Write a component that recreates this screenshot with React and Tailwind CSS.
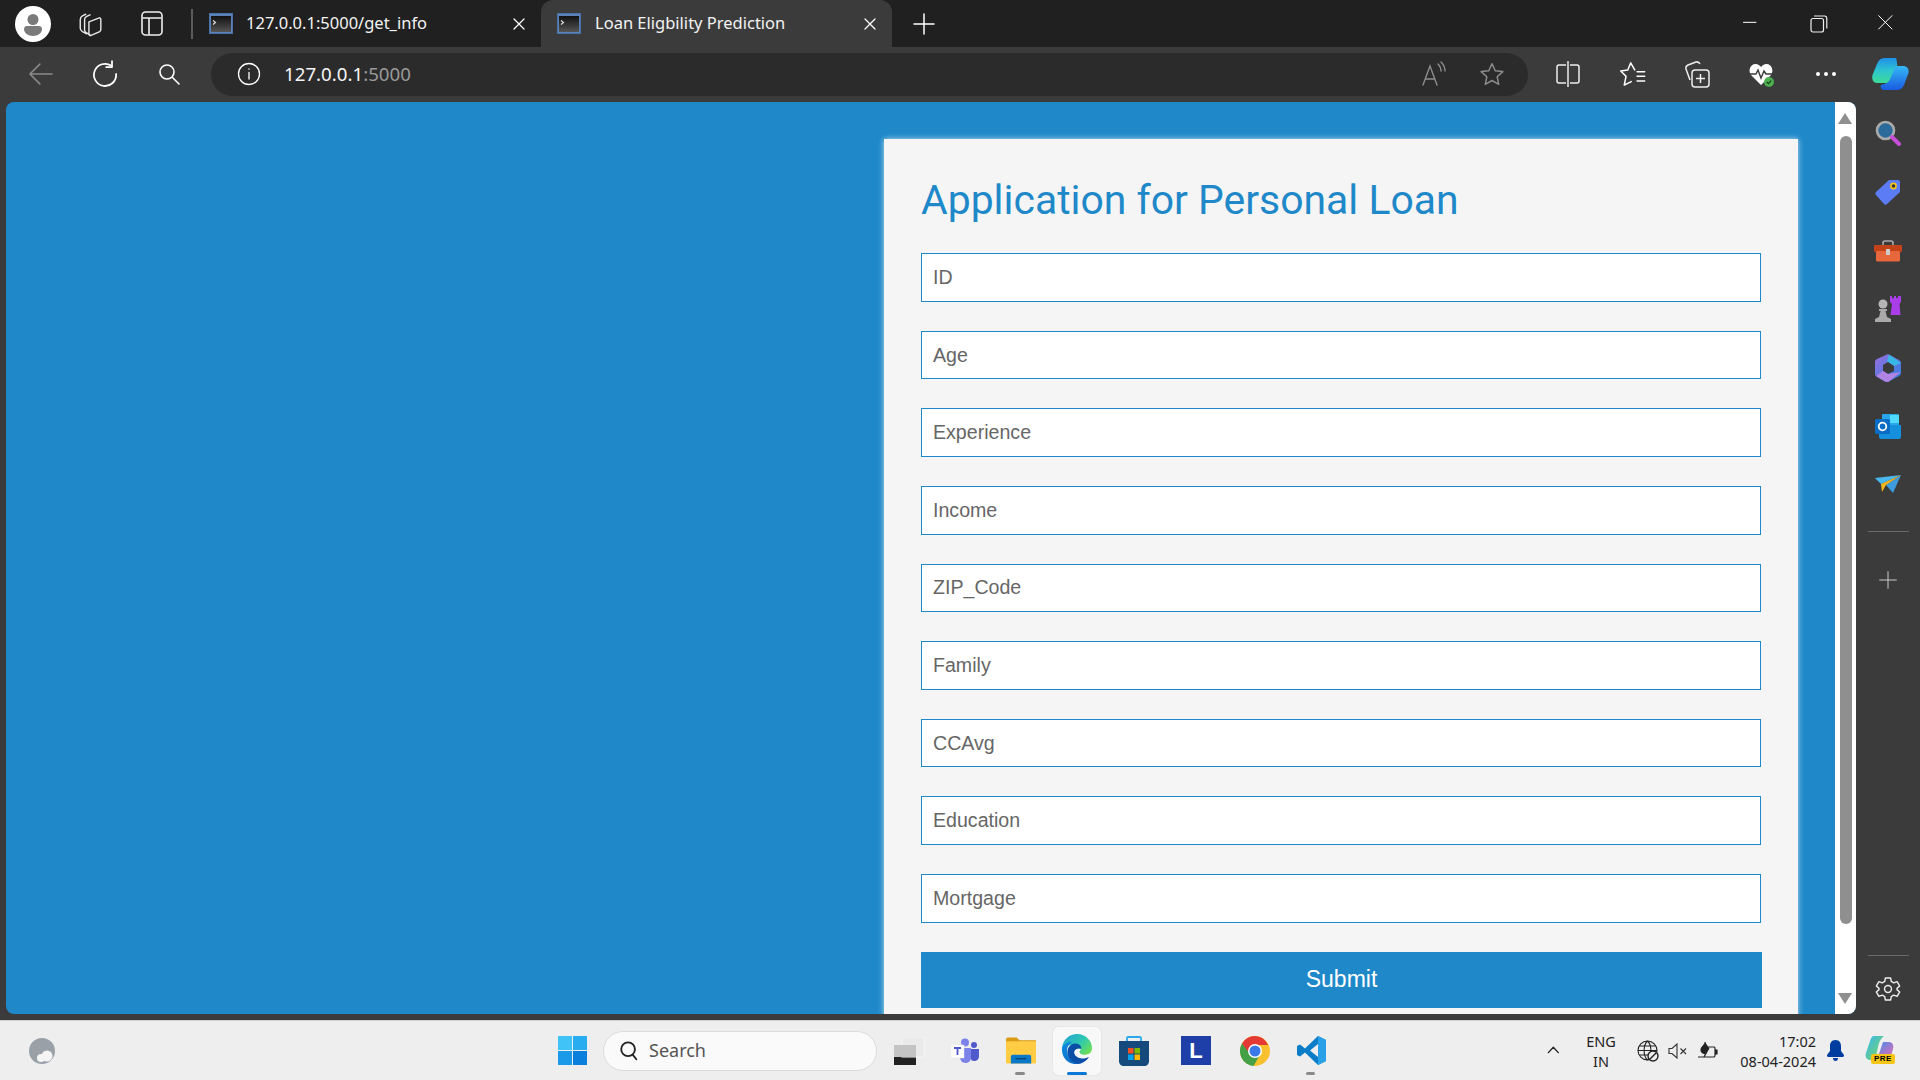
import React from 'react';

const labels = ['ID', 'Age', 'Experience', 'Income', 'ZIP_Code', 'Family', 'CCAvg', 'Education', 'Mortgage'];

function Line({ size = 24, stroke = '#fff', sw = 1.5, children }) {
    return (
        <svg width={size} height={size} viewBox="0 0 24 24" fill="none" stroke={stroke} strokeWidth={sw} strokeLinecap="round" strokeLinejoin="round">
            {children}
        </svg>
    );
}

function Favicon() {
    return (
        <svg width="24" height="21" viewBox="0 0 24 21">
            <defs>
                <linearGradient id="fav" x1="0" y1="0" x2="0" y2="1">
                    <stop offset="0" stopColor="#111" />
                    <stop offset="1" stopColor="#555" />
                </linearGradient>
            </defs>
            <rect x="0.5" y="0.5" width="23" height="20" fill="#5a82b8" stroke="#4a72a8" />
            <rect x="2" y="3" width="20" height="16" fill="url(#fav)" />
            <path d="M4 7.5 L6.5 9.5 L4 11.5" fill="none" stroke="#ddd" strokeWidth="1.2" />
        </svg>
    );
}

function Tab({ title, active }) {
    return (
        <div className={active ? 'flex h-[47px] w-[351px] items-center rounded-t-[12px] bg-[#3b3b3b] pl-[16px]' : 'flex h-[47px] w-[348px] items-center pl-[16px]'}>
            <Favicon />
            <span className={active ? "ml-[14px] font-['Noto_Sans',sans-serif] text-[16.5px] whitespace-nowrap text-[#f2f2f2]" : "ml-[13px] font-['Noto_Sans',sans-serif] text-[16.5px] whitespace-nowrap text-[#f2f2f2]"}>{title}</span>
            <div className="mr-[12px] ml-auto flex w-[20px] justify-center">
                <Line size={20}><path d="M6 6 L18 18 M18 6 L6 18" /></Line>
            </div>
        </div>
    );
}

function TabBar() {
    return (
        <div className="flex h-[47px] items-center bg-[#202020]">
            <div className="ml-[15px] flex h-[36px] w-[36px] items-center justify-center rounded-full bg-white">
                <svg width="26" height="26" viewBox="0 0 26 26" fill="#7a7a7a">
                    <circle cx="13" cy="8.5" r="5.5" />
                    <path d="M4 18 C4 15.5 6 15 8 15 H18 C20 15 22 15.5 22 18 C22 22 18 25 13 25 C8 25 4 22 4 18 Z" />
                </svg>
            </div>
            <div className="ml-[21px] flex w-[36px] justify-center">
                <Line size={26} sw={1.3} stroke="#e8e8e8">
                    <path d="M9 21 L5 19 C3.5 18 3 17 3 16 V8 C3 6 4 5 5 4.5 L8 3" />
                    <path d="M12 22 L8.5 20 C7.5 19.5 7 18.5 7 17.5 V8 C7 6.5 8 5.5 9 5 L12 3.5" />
                    <path d="M11 10 L20 6.5 C21 6 22 6.5 22 8 V17 C22 18 21.5 18.5 21 19 L13 22.5 C12 23 11 22.5 11 21 Z" />
                </Line>
            </div>
            <div className="ml-[32px] flex w-[24px] justify-center">
                <svg width="22" height="25" viewBox="0 0 22 25" fill="none" stroke="#eee" strokeWidth="1.6">
                    <rect x="1" y="1" width="20" height="23" rx="3.5" />
                    <path d="M1.5 7 H20.5 M8 7 V23.5" />
                </svg>
            </div>
            <div className="ml-[27px] h-[30px] w-[2px] bg-[#5a5a5a]" />
            <Tab title="127.0.0.1:5000/get_info" />
            <Tab title="Loan Eligbility Prediction" active />
            <div className="ml-[20px] flex w-[24px] justify-center">
                <Line size={24} sw={1.5}><path d="M2 12 H22 M12 2 V22" /></Line>
            </div>
            <div className="ml-auto flex items-center gap-[48px] pr-[23px]">
                <div className="flex w-[20px] justify-center">
                    <Line size={20} sw={1.2}><path d="M3 10 H18" /></Line>
                </div>
                <div className="flex w-[20px] justify-center">
                    <svg width="18" height="18" viewBox="0 0 18 18" fill="none" stroke="#eee" strokeWidth="1.2">
                        <rect x="1" y="3.5" width="12.5" height="13.5" rx="2" />
                        <path d="M4 1 H14.5 C16 1 16.8 2 16.8 3.5 V13.5" />
                    </svg>
                </div>
                <div className="flex w-[20px] justify-center">
                    <Line size={20} sw={1.2}><path d="M2 2 L18 18 M18 2 L2 18" /></Line>
                </div>
            </div>
        </div>
    );
}

function ToolBar() {
    return (
        <div className="flex h-[55px] items-center bg-[#3b3b3b] pb-[1px]">
            <div className="ml-[21px] flex items-center gap-[24px]">
                <div className="flex w-[40px] justify-center">
                    <Line size={28} stroke="#8a8a8a" sw={1.4}><path d="M2.5 12 H21.5 M11 3.5 L2.5 12 L11 20.5" /></Line>
                </div>
                <div className="flex w-[40px] justify-center">
                    <Line size={28} sw={1.5}>
                        <path d="M17.5 5 A9.5 9.5 0 1 0 21.5 12" />
                        <path d="M18 1 V6 H13" />
                    </Line>
                </div>
                <div className="flex w-[40px] justify-center">
                    <Line size={24} sw={1.6}>
                        <circle cx="10" cy="10" r="7" />
                        <path d="M15.5 15.5 L22 22" />
                    </Line>
                </div>
            </div>
            <div className="ml-[22px] flex h-[43px] w-[1317px] items-center rounded-full bg-[#2b2b2b]">
                <div className="ml-[26px] flex w-[24px] justify-center">
                    <Line size={24} sw={1.3}>
                        <circle cx="12" cy="12" r="10.5" />
                        <path d="M12 10.5 V17 M12 6.8 V7.2" />
                    </Line>
                </div>
                <span className="ml-[23px] font-['Noto_Sans',sans-serif] text-[18.7px] text-[#f5f5f5]">
                    127.0.0.1<span className="text-[#9a9a9a]">:5000</span>
                </span>
                <div className="ml-auto flex w-[26px] justify-center">
                    <svg width="26" height="26" viewBox="0 0 26 26" fill="none" stroke="#8c8c8c" strokeWidth="1.4" strokeLinecap="round">
                        <path d="M2 24 L9 5 L16 24 M4.5 18 H13.5" />
                        <path d="M17 3 C19 5 20 7 20 10 M20 1 C23 4 24 7 24 10" />
                    </svg>
                </div>
                <div className="mr-[23px] ml-[32px] flex w-[26px] justify-center">
                    <Line size={26} stroke="#8c8c8c" sw={1.4}><path d="M12 2.5 L15 9 L22 9.8 L16.8 14.6 L18.2 21.5 L12 18 L5.8 21.5 L7.2 14.6 L2 9.8 L9 9 Z" /></Line>
                </div>
            </div>
            <div className="ml-[20px] flex items-center gap-[24.5px]">
                <div className="flex w-[40px] justify-center">
                    <svg width="24" height="28" viewBox="0 0 24 28" fill="none" stroke="#eee" strokeWidth="1.5">
                        <path d="M10 5 H3 C2 5 1 6 1 7 V21 C1 22 2 23 3 23 H10 M14 5 H21 C22 5 23 6 23 7 V21 C23 22 22 23 21 23 H14" />
                        <path d="M12 1 V27" />
                    </svg>
                </div>
                <div className="flex w-[40px] justify-center">
                    <Line size={28} sw={1.3}>
                        <path d="M13.5 8.5 L10 2.5 L7.5 8.5 L1.5 9.5 L6 14 L4.5 21.5 L10.5 18.5" />
                        <path d="M15.5 10 H22 M15.5 14 H22 M15.5 18 H22" />
                    </Line>
                </div>
                <div className="flex w-[40px] justify-center">
                    <svg width="26" height="28" viewBox="0 0 26 28" fill="none" stroke="#eee" strokeWidth="1.5" strokeLinejoin="round">
                        <path d="M6 20 L2 9 C1.5 7 2 6 4 5 L12 2 C14 1.5 15 2 16 4" />
                        <rect x="8" y="10" width="17" height="17" rx="3" />
                        <path d="M16.5 14 V23 M12 18.5 H21" />
                    </svg>
                </div>
                <div className="flex w-[40px] justify-center">
                    <svg width="28" height="28" viewBox="0 0 28 28">
                        <path d="M13 25 L3 15 C0 11 2 4 7.5 4 C10 4 12 5.5 13 7 C14 5.5 16 4 18.5 4 C24 4 26 11 23 15 Z" fill="#fff" />
                        <path d="M1 14 H8 L10 10 L13 18 L16 11 L18 14 H25" fill="none" stroke="#3b3b3b" strokeWidth="1.4" />
                        <circle cx="21" cy="22" r="5" fill="#4caf50" />
                        <path d="M18.8 22 L20.4 23.6 L23.2 20.6" fill="none" stroke="#1b3a1b" strokeWidth="1.1" />
                    </svg>
                </div>
                <div className="flex w-[40px] justify-center gap-[4px]">
                    <span className="h-[4px] w-[4px] rounded-full bg-white" />
                    <span className="h-[4px] w-[4px] rounded-full bg-white" />
                    <span className="h-[4px] w-[4px] rounded-full bg-white" />
                </div>
                <div className="flex w-[40px] justify-center">
                    <svg width="37" height="32" viewBox="0 0 37 32">
                        <defs>
                            <linearGradient id="cop1" x1="0" y1="0" x2="0" y2="1">
                                <stop offset="0" stopColor="#1f8fe8" />
                                <stop offset="0.5" stopColor="#2ec4d0" />
                                <stop offset="1" stopColor="#3ddc97" />
                            </linearGradient>
                            <linearGradient id="cop2" x1="0" y1="0" x2="0" y2="1">
                                <stop offset="0" stopColor="#36b8f5" />
                                <stop offset="1" stopColor="#1a5be0" />
                            </linearGradient>
                        </defs>
                        <path d="M12 0 H24 C25 3 26 8 24 14 L20 25 L5 25 C1 25 -0.5 21 0.5 17 L5 6 C6.5 2 9 0 12 0 Z" fill="url(#cop1)" />
                        <path d="M24 8 H31 C35 8 37.5 11 36.5 15 L32 27 C31 30 28 32 25 32 H12 C9 32 8 29 9 27 C14 26 17 24 18.5 20 L22 12 Z" fill="url(#cop2)" />
                    </svg>
                </div>
            </div>
        </div>
    );
}

function Scrollbar() {
    return (
        <div className="flex w-[21px] shrink-0 flex-col items-center bg-white pt-[11px]">
            <svg width="14" height="11" viewBox="0 0 14 11" className="ml-[-1px]"><path d="M7 0 L14 11 H0 Z" fill="#8f8f8f" /></svg>
            <div className="mt-[12px] h-[788px] w-[12px] rounded-full bg-[#8f8f8f]" />
            <svg width="14" height="11" viewBox="0 0 14 11" className="mt-[69px] ml-[-1px]"><path d="M0 0 H14 L7 11 Z" fill="#8f8f8f" /></svg>
        </div>
    );
}

function Page() {
    return (
        <div className="flex h-[912px] w-[1850px] overflow-hidden rounded-[8px] bg-[#1e88c9]">
            <div className="flex flex-1 justify-end overflow-hidden pt-[37px] pr-[37px]">
                <div className="h-[1100px] w-[914px] bg-[#f5f5f5] px-[37px] pt-[37px] shadow-[0_0_6px_rgba(255,255,255,0.7)]">
                    <h2 className="mb-[29.3px] font-['Roboto',sans-serif] text-[40.9px] leading-[48px] text-[#1e88c9]">Application for Personal Loan</h2>
                    <form className="flex flex-col gap-[29px]" onSubmit={(e) => e.preventDefault()}>
                        {labels.map((label) => (
                            <input
                                key={label}
                                placeholder={label}
                                className="h-[48.6px] w-[840px] border border-[#1e88c9] bg-white px-[11px] font-['Liberation_Sans',sans-serif] text-[19.6px] placeholder:text-[#666]"
                            />
                        ))}
                        <button className="h-[56px] w-[841px] bg-[#1e88c9] font-['Liberation_Sans',sans-serif] text-[23px] text-white">Submit</button>
                    </form>
                </div>
            </div>
            <Scrollbar />
        </div>
    );
}

function SideBar() {
    return (
        <div className="flex w-[64px] flex-col items-center pt-[1px]">
            <div className="flex h-[59px] items-center">
                <svg width="26" height="26" viewBox="0 0 26 26">
                    <circle cx="10.5" cy="10.5" r="8.5" fill="#2b6b9b" stroke="#aaa" strokeWidth="2.6" />
                    <path d="M17 17 L24 24" stroke="#c74fd8" strokeWidth="4" strokeLinecap="round" />
                </svg>
            </div>
            <div className="flex h-[59px] items-center">
                <svg width="26" height="26" viewBox="0 0 26 26">
                    <path d="M14 1 H23 C24.5 1 25 2 25 3 V13 L12 25 C11 26 10 26 9 25 L1 16 C0 15 0 14 1 13 Z" fill="#5b7cf5" />
                    <circle cx="18.5" cy="7" r="2.6" fill="#333" stroke="#f5c518" strokeWidth="1.6" />
                </svg>
            </div>
            <div className="flex h-[59px] items-center">
                <svg width="28" height="22" viewBox="0 0 28 22">
                    <path d="M9 6 V3 C9 2 10 1 11 1 H17 C18 1 19 2 19 3 V6" fill="none" stroke="#aaa" strokeWidth="1.6" />
                    <rect x="0" y="5" width="28" height="7" rx="1" fill="#c4421a" />
                    <rect x="2" y="11" width="24" height="10.5" rx="1.5" fill="#e8673c" />
                    <rect x="12" y="9" width="4" height="6" fill="#ccc" />
                </svg>
            </div>
            <div className="flex h-[58px] items-center">
                <svg width="28" height="28" viewBox="0 0 28 28">
                    <path d="M16 1 H18 V3 H20 V1 H22 V3 H24 V1 H27 V7 L25.5 9 L26.5 20 H16.5 L18 9 L16 7 Z" fill="#a93de8" />
                    <circle cx="9" cy="9" r="4.5" fill="#b5b5b5" />
                    <path d="M5 14 H13 V16 H11.5 L13 22 L17 24 V27 H1 V24 L5 22 L6.5 16 H5 Z" fill="#aaa" />
                </svg>
            </div>
            <div className="flex h-[59px] items-center">
                <svg width="26" height="28" viewBox="0 0 26 28">
                    <defs>
                        <linearGradient id="m365" x1="0" y1="0" x2="1" y2="1">
                            <stop offset="0" stopColor="#9a6fe0" />
                            <stop offset="1" stopColor="#2a7fe0" />
                        </linearGradient>
                    </defs>
                    <path d="M13 0 L24 6 C25.5 7 26 8 26 9 V19 C26 20 25.5 21 24 22 L13 28 C12 28.3 11 28 10 27.5 L2 23 C0.5 22 0 21 0 20 V8 C0 7 0.5 6 2 5 Z" fill="url(#m365)" />
                    <path d="M13 8 L19 11.5 V17 L13 20 L8 17 V11 Z" fill="#3b3b3b" />
                    <path d="M14 0.5 L26 9 L19 12 L12 7 Z" fill="#39b6e8" />
                    <path d="M1 22 L8 17 L13 20 L26 18 L14 27.5 C12 28 11 28 10 27.5 Z" fill="#b184e4" />
                </svg>
            </div>
            <div className="flex h-[58px] items-center">
                <svg width="26" height="25" viewBox="0 0 26 25">
                    <rect x="7" y="0" width="17" height="15" rx="1" fill="#28a8ea" />
                    <rect x="15" y="1" width="9" height="8" fill="#50d9ff" />
                    <path d="M4 11 H26 V23 C26 24 25 25 24 25 H6 C5 25 4 24 4 23 Z" fill="#1490df" />
                    <rect x="0" y="5" width="15" height="15" rx="1.5" fill="#0a6cc4" />
                    <circle cx="7.5" cy="12.5" r="3.8" fill="none" stroke="#fff" strokeWidth="1.8" />
                </svg>
            </div>
            <div className="flex h-[59px] items-center">
                <svg width="26" height="20" viewBox="0 0 26 20">
                    <path d="M0 3 L26 0 L6 9 Z" fill="#4ab8f0" />
                    <path d="M26 0 L18 18 L11 10 Z" fill="#3d9be0" />
                    <path d="M26 0 L6 9 L7 17 L11 10 Z" fill="#f5b51e" />
                </svg>
            </div>
            <div className="mt-[17px] h-[1px] w-[41px] bg-[#6a6a6a]" />
            <div className="mt-[38px]">
                <Line size={20} sw={1.1} stroke="#d8d8d8"><path d="M12 2 V22 M2 12 H22" /></Line>
            </div>
            <div className="mt-[365px] h-[1px] w-[41px] bg-[#6a6a6a]" />
            <div className="mt-[20px]">
                <svg width="26" height="26" viewBox="0 0 24 24" fill="none" stroke="#eee" strokeWidth="1.3" strokeLinejoin="round">
                    <path d="M9.6 1.8 H14.4 L15 5 L17.3 6.3 L20.4 5.2 L22.8 9.3 L20.3 11.4 V12.6 L22.8 14.7 L20.4 18.8 L17.3 17.7 L15 19 L14.4 22.2 H9.6 L9 19 L6.7 17.7 L3.6 18.8 L1.2 14.7 L3.7 12.6 V11.4 L1.2 9.3 L3.6 5.2 L6.7 6.3 L9 5 Z" />
                    <circle cx="12" cy="12" r="3.2" />
                </svg>
            </div>
        </div>
    );
}

function TaskbarApps() {
    return (
        <>
            <div className="ml-[17px] flex w-[31px] justify-center">
                <svg width="31" height="28" viewBox="0 0 31 28">
                    <rect x="0" y="8" width="22" height="20" fill="#222" />
                    <rect x="8" y="0" width="22" height="20" fill="#e8e8e8" fillOpacity="0.8" stroke="#f5f5f5" />
                    <rect x="0" y="8" width="22" height="12" fill="#c4c4c4" />
                </svg>
            </div>
            <div className="ml-[25px] flex w-[30px] justify-center">
                <svg width="28" height="26" viewBox="0 0 28 26">
                    <circle cx="14" cy="4.5" r="4" fill="#7b83eb" />
                    <circle cx="23" cy="7" r="3" fill="#5059c9" />
                    <path d="M9 10 H20 V20 C20 23 17 25 14.5 25 C11 25 9 22 9 19 Z" fill="#7b83eb" />
                    <path d="M20 11 H28 V18 C28 21 26 23 23 23 C21.5 23 20 22 20 21 Z" fill="#5059c9" />
                    <rect x="0" y="7" width="13" height="13" fill="#fff" stroke="#e5e5e5" strokeWidth="0.5" />
                    <path d="M3 10 H10 M6.5 10 V17" stroke="#5059c9" strokeWidth="1.8" />
                </svg>
            </div>
            <div className="ml-[26px] flex w-[30px] justify-center">
                <svg width="31" height="27" viewBox="0 0 31 27">
                    <path d="M0 2 C0 1 1 0 2 0 H11 L14 3 H30 C30.5 3 31 3.5 31 4 V8 H0 Z" fill="#d99a14" />
                    <rect x="0" y="4" width="31" height="23" rx="1" fill="#ffcc44" />
                    <path d="M5 27 V20 C5 19 6 18 7 18 H24 C25 18 26 19 26 20 V27 Z" fill="#0a78c8" />
                    <path d="M10 22 H21" stroke="#053d6b" strokeWidth="1.2" />
                </svg>
            </div>
            <div className="ml-[17px] flex h-[48px] w-[48px] items-center justify-center rounded-[5px] bg-[#f8f8f8] shadow-[0_0_1px_rgba(0,0,0,0.2)]">
                <svg width="30" height="30" viewBox="0 0 30 30" className="mb-[3px]">
                    <defs>
                        <linearGradient id="edge1" x1="0" y1="0" x2="1" y2="0.7">
                            <stop offset="0" stopColor="#1ba0d8" />
                            <stop offset="0.6" stopColor="#30c8b0" />
                            <stop offset="1" stopColor="#6ade58" />
                        </linearGradient>
                        <linearGradient id="edge2" x1="0" y1="0" x2="0.6" y2="1">
                            <stop offset="0" stopColor="#0f8fe0" />
                            <stop offset="1" stopColor="#0a6cc8" />
                        </linearGradient>
                    </defs>
                    <path d="M0 14 C1 5 8 0 15 0 C24 0 30 7 30 14 C30 19 26 21 22 21 C18 21 14 19 15 16 C16 13 9 10 5 12 C3 13 1 14 0 14 Z" fill="url(#edge1)" />
                    <path d="M0 14 C2 9 6 8 10 8 C5 11 4 16 6 21 C8 26 14 30 20 29 C10 33 -1 26 0 14 Z" fill="url(#edge2)" />
                    <path d="M6 21 C4 15 8 9 14 9.5 C18 10 20 13 19 15 C15 14 12 16 12.5 19 C13 23 18 25 24 24 L27 23 C23 29 18 30 15 29.5 C10 28.5 7 25 6 21 Z" fill="#0a4ea8" />
                    <path d="M19 15 C15 14 12 16 12.5 19 C13 23 18 25 24 24 L25 20.5 C21 21.5 17 20 17.5 17.5 Z" fill="#f8f8f8" />
                </svg>
            </div>
            <div className="ml-[18px] flex w-[30px] justify-center">
                <svg width="30" height="30" viewBox="0 0 30 30">
                    <path d="M8 6 V2 C8 1 8.5 1 9.5 1 H20.5 C21.5 1 22 1 22 2 V6" fill="none" stroke="#28a8ea" strokeWidth="1.8" />
                    <path d="M0 5 H30 V25 C30 28 28 30 25 30 H5 C2 30 0 28 0 25 Z" fill="#164a7c" />
                    <rect x="9" y="12" width="5.5" height="5.5" fill="#f25022" />
                    <rect x="15.5" y="12" width="5.5" height="5.5" fill="#7fba00" />
                    <rect x="9" y="18.5" width="5.5" height="5.5" fill="#00a4ef" />
                    <rect x="15.5" y="18.5" width="5.5" height="5.5" fill="#ffb900" />
                </svg>
            </div>
            <div className="ml-[32px] flex h-[29px] w-[30px] items-center justify-center bg-[#1f3fa8] font-['Liberation_Sans',sans-serif] text-[22px] font-bold text-white">L</div>
            <div className="ml-[29px] flex w-[30px] justify-center">
                <svg width="30" height="30" viewBox="0 0 30 30">
                    <circle cx="15" cy="15" r="15" fill="#fbc02d" />
                    <path d="M15 0 A15 15 0 0 0 2 7.5 L8.5 18.7 L15 9 H28 A15 15 0 0 0 15 0 Z" fill="#e53935" />
                    <path d="M2 7.5 A15 15 0 0 0 13.5 30 L20 18.7 L10 18 Z" fill="#43a047" />
                    <circle cx="15" cy="15" r="7" fill="#fff" />
                    <circle cx="15" cy="15" r="5.5" fill="#3b78e7" />
                </svg>
            </div>
            <div className="ml-[26px] flex w-[30px] justify-center">
                <svg width="29" height="29" viewBox="0 0 29 29">
                    <path d="M21 0 L29 4 V25 L21 29 L8 16.5 L3 20.5 L0 19 V10 L3 8.5 L8 12.5 Z M21 8 L13 14.5 L21 21 Z" fill="#0a7cc8" fillRule="evenodd" />
                    <path d="M21 0 L29 4 V25 L21 29 Z" fill="#2aa0e8" />
                </svg>
            </div>
        </>
    );
}

function Taskbar() {
    return (
        <div className="relative flex h-[60px] items-center border-t border-[#d0d0d0] bg-[#eeeeee]">
            <div className="ml-[28px] flex w-[28px] justify-center">
                <svg width="28" height="28" viewBox="0 0 28 28">
                    <ellipse cx="14" cy="14" rx="13" ry="13" fill="#9aa0a8" />
                    <circle cx="19" cy="19" r="5.5" fill="#f4f4f4" />
                    <circle cx="13" cy="21" r="4" fill="#f4f4f4" />
                </svg>
            </div>
            <div className="ml-[502px] grid h-[29px] w-[29px] grid-cols-2 gap-[1px]">
                <div className="bg-[#40c4f8]" />
                <div className="bg-[#28aef0]" />
                <div className="bg-[#1a9ae8]" />
                <div className="bg-[#0a80dc]" />
            </div>
            <div className="ml-[16px] flex h-[40px] w-[274px] items-center rounded-full border border-[#dcdcdc] bg-[#fafafa] pl-[14px]">
                <Line size={22} stroke="#222" sw={2}>
                    <circle cx="11" cy="10" r="7.5" />
                    <path d="M16 16 L20 21" />
                </Line>
                <span className="ml-[9px] font-['Noto_Sans',sans-serif] text-[18px] text-[#555]">Search</span>
            </div>
            <TaskbarApps />
            <span className="absolute bottom-[5px] left-[1015px] h-[3px] w-[10px] rounded-full bg-[#8a8a8a]" />
            <span className="absolute bottom-[5px] left-[1067px] h-[3px] w-[20px] rounded-full bg-[#0a78d6]" />
            <span className="absolute bottom-[5px] left-[1306px] h-[3px] w-[9px] rounded-full bg-[#8a8a8a]" />
            <div className="ml-[219px] flex w-[20px] justify-center">
                <Line size={20} stroke="#222" sw={1.6}><path d="M4 14 L10 7.5 L16 14" /></Line>
            </div>
            <div className="ml-[18px] flex w-[36px] flex-col items-center font-['Noto_Sans',sans-serif] text-[14.5px] leading-[20px] text-[#222]">
                <span>ENG</span>
                <span>IN</span>
            </div>
            <div className="ml-[18px] flex w-[22px] justify-center">
                <svg width="22" height="22" viewBox="0 0 22 22" fill="none" stroke="#222" strokeWidth="1.1">
                    <circle cx="10.5" cy="10.5" r="9.5" />
                    <path d="M1 10.5 H20 M10.5 1 C6 5 6 16 10.5 20 M10.5 1 C15 5 15 16 10.5 20 M2.5 6 H18.5 M2.5 15 H14" />
                    <circle cx="16" cy="16" r="5" fill="#eee" strokeWidth="1.4" />
                    <path d="M13 19 L19 13" strokeWidth="1.4" />
                </svg>
            </div>
            <div className="ml-[8px] flex w-[22px] justify-center">
                <svg width="20" height="16" viewBox="0 0 20 16" fill="none" stroke="#333" strokeWidth="1.1">
                    <path d="M1 5.5 H4 L9 1 V15 L4 10.5 H1 Z" />
                    <path d="M12.5 5.5 L18 11 M18 5.5 L12.5 11" />
                </svg>
            </div>
            <div className="ml-[8px] flex w-[22px] justify-center">
                <svg width="22" height="20" viewBox="0 0 22 20" fill="none" stroke="#222" strokeWidth="1.2">
                    <path d="M1 16 H17 C18 16 18 15 18 14 V8 C18 7 18 6 17 6 H10" />
                    <path d="M18 9 H20 V13 H18" fill="#222" />
                    <path d="M8 1 C9 4 4 5 4 9 C4 12 7 13 9 12 L7 16 L12 7" fill="#222" />
                </svg>
            </div>
            <div className="ml-[7px] flex w-[90px] flex-col items-end font-['Noto_Sans',sans-serif] text-[14.5px] leading-[20px] text-[#222]">
                <span>17:02</span>
                <span>08-04-2024</span>
            </div>
            <div className="ml-[9px] flex w-[20px] justify-center">
                <svg width="17" height="21" viewBox="0 0 17 21" fill="#003d9e">
                    <path d="M8.5 0 C4.5 0 3 3 3 6 V11 L0 15 C0 16 0.5 17 1 17 H16 C16.5 17 17 16 17 15 L14 11 V6 C14 3 12.5 0 8.5 0 Z" />
                    <path d="M6 18 H11 C11 20 10 21 8.5 21 C7 21 6 20 6 18 Z" />
                </svg>
            </div>
            <div className="relative ml-[20px] h-[32px] w-[30px]">
                <svg width="29" height="28" viewBox="0 0 29 28">
                    <defs>
                        <linearGradient id="pre1" x1="0" y1="0" x2="1" y2="1">
                            <stop offset="0" stopColor="#38b6f0" />
                            <stop offset="1" stopColor="#7ed957" />
                        </linearGradient>
                        <linearGradient id="pre2" x1="0" y1="0" x2="1" y2="1">
                            <stop offset="0" stopColor="#3a8ff0" />
                            <stop offset="1" stopColor="#f06ab0" />
                        </linearGradient>
                    </defs>
                    <path d="M9 1 H19 C15 4 14 8 13 12 L11 21 C10 24 8 25 5 25 C1 25 0 21 1 18 L5 6 C6 3 7 1 9 1 Z" fill="url(#pre1)" />
                    <path d="M18 7 H24 C28 7 29 11 28 14 L25 24 H10 C13 22 14 19 15 16 L17 10 Z" fill="url(#pre2)" />
                </svg>
                <span className="absolute top-[19px] left-[6px] rounded-[2px] bg-[#f5c518] px-[3px] font-['Liberation_Sans',sans-serif] text-[8px] leading-[10px] font-bold tracking-[0.5px] text-black">PRE</span>
            </div>
        </div>
    );
}

export default function App() {
    return (
        <div className="flex h-screen w-[1920px] flex-col overflow-hidden bg-[#3b3b3b]">
            <TabBar />
            <ToolBar />
            <div className="flex h-[918px] pl-[6px]">
                <Page />
                <SideBar />
            </div>
            <Taskbar />
        </div>
    );
}
